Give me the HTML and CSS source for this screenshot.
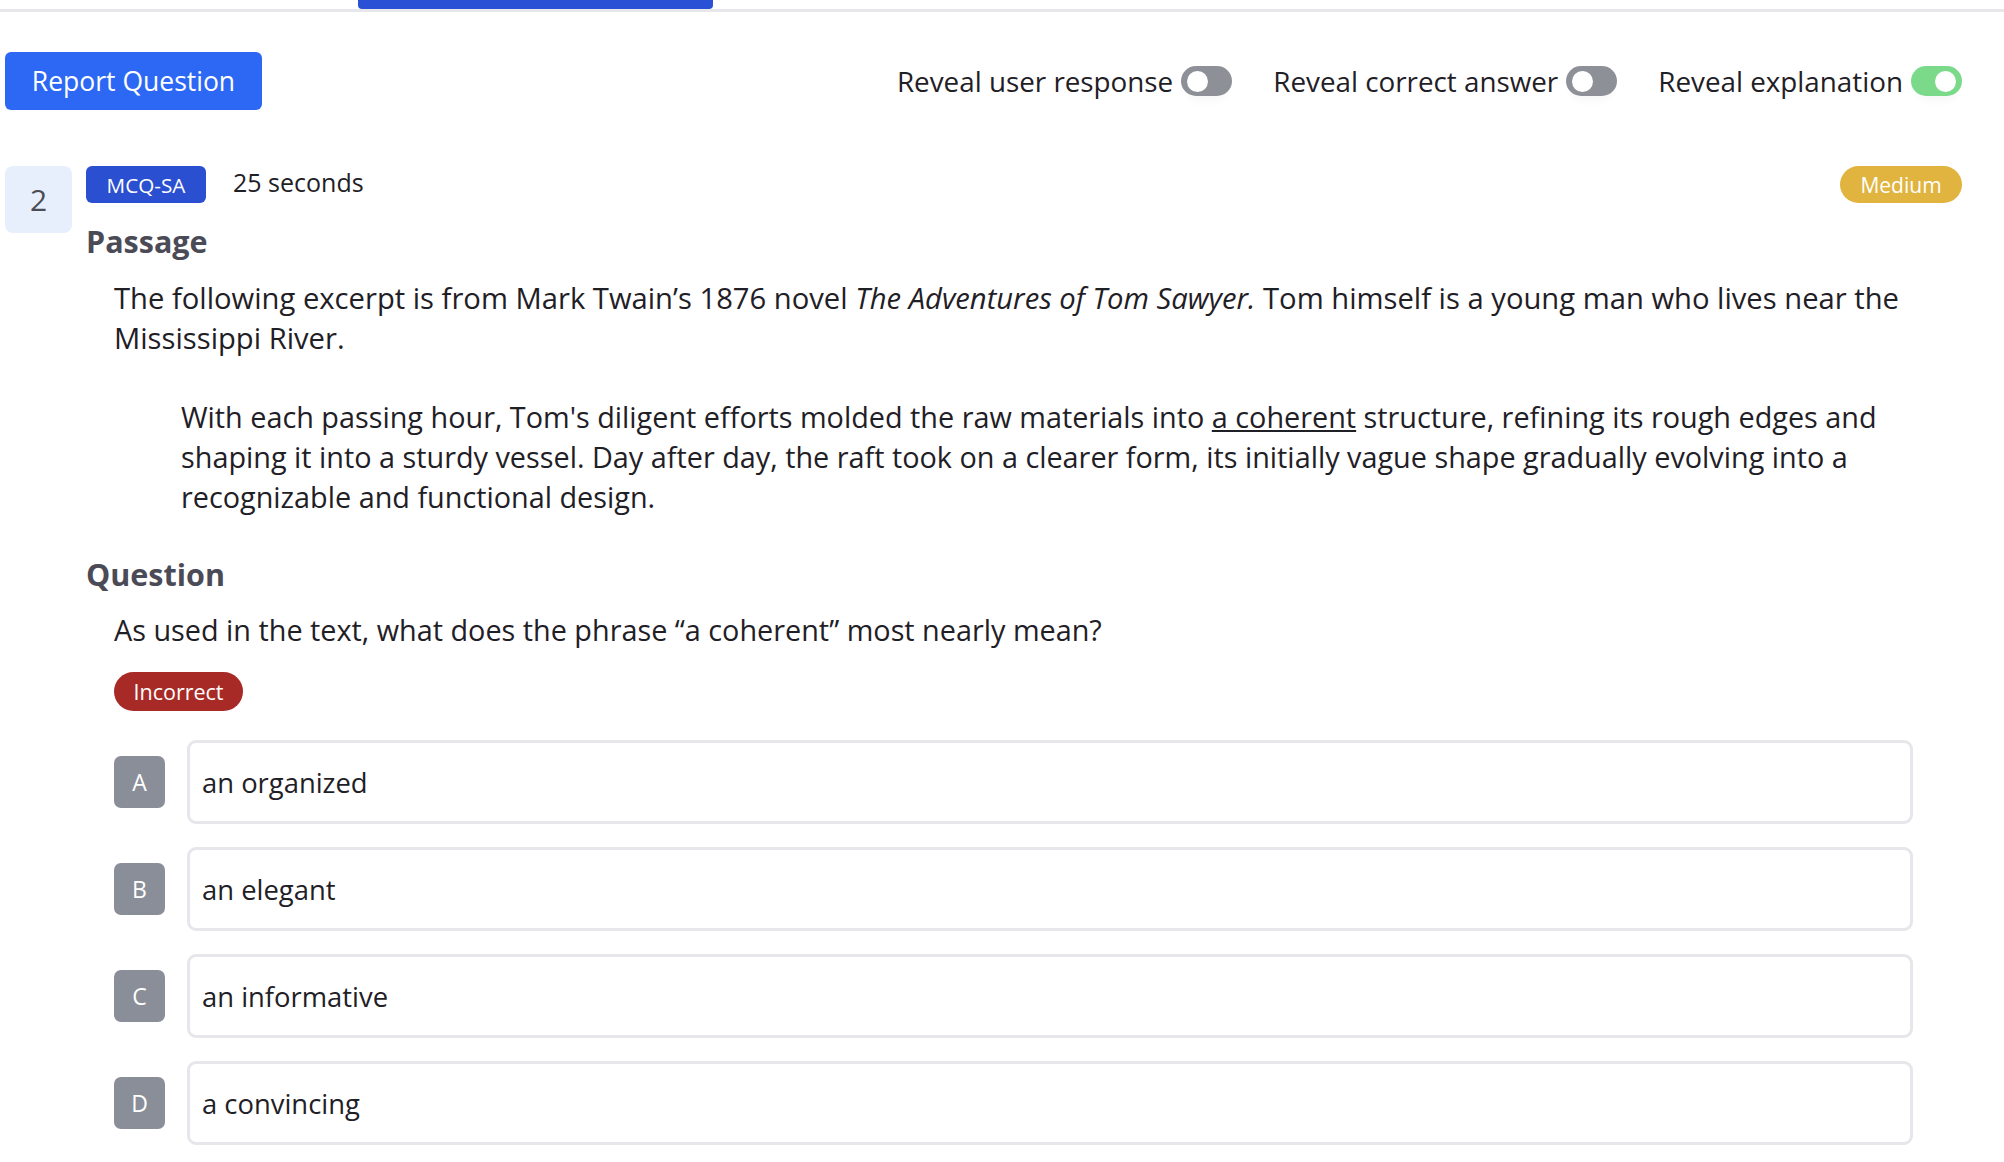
FILE: index.html
```html
<!DOCTYPE html>
<html lang="en">
<head>
<meta charset="utf-8">
<title>Question review</title>
<link rel="stylesheet" href="styles.css">
</head>
<body>
<div class="tabs">
  <div class="tab-indicator"></div>
</div>

<div class="toolbar">
  <button class="report-btn">Report Question</button>
  <div class="toggles">
    <label class="toggle-item">Reveal user response <span class="switch"><span class="knob"></span></span></label>
    <label class="toggle-item">Reveal correct answer <span class="switch"><span class="knob"></span></span></label>
    <label class="toggle-item">Reveal explanation <span class="switch on"><span class="knob"></span></span></label>
  </div>
</div>

<div class="question">
  <div class="qnum">2</div>
  <div class="qbody">
    <div class="meta">
      <span class="type-badge">MCQ-SA</span>
      <span class="time">25 seconds</span>
      <span class="difficulty">Medium</span>
    </div>
    <h2 class="section-title">Passage</h2>
    <p class="intro">The following excerpt is from Mark Twain’s 1876 novel <em>The Adventures of Tom Sawyer.</em> Tom himself is a young man who lives near the Mississippi River.</p>
    <p class="excerpt">With each passing hour, Tom's diligent efforts molded the raw materials into <u>a coherent</u> structure, refining its rough edges and shaping it into a sturdy vessel. Day after day, the raft took on a clearer form, its initially vague shape gradually evolving into a recognizable and functional design.</p>
    <h2 class="section-title q-title">Question</h2>
    <p class="prompt">As used in the text, what does the phrase “a coherent” most nearly mean?</p>
    <span class="result">Incorrect</span>
    <div class="options">
      <div class="option"><span class="letter">A</span><div class="choice">an organized</div></div>
      <div class="option"><span class="letter">B</span><div class="choice">an elegant</div></div>
      <div class="option"><span class="letter">C</span><div class="choice">an informative</div></div>
      <div class="option"><span class="letter">D</span><div class="choice">a convincing</div></div>
    </div>
  </div>
</div>
</body>
</html>
```

FILE: styles.css
```css
* { box-sizing: border-box; }

body {
  margin: 0;
  font-family: "Open Sans", "Noto Sans", sans-serif;
  color: #1f2026;
  background: #fff;
}

.tabs {
  height: 12px;
  border-bottom: 3px solid #e6e6eb;
  padding-left: 358px;
}

.tab-indicator {
  width: 355px;
  height: 9px;
  background: #2a50d6;
  border-radius: 0 0 4px 4px;
}

.toolbar {
  display: flex;
  justify-content: space-between;
  align-items: center;
  padding: 40px 42px 0 5px;
}

.report-btn {
  font-family: inherit;
  font-size: 26.5px;
  color: #fff;
  background: #2d68f5;
  border: none;
  border-radius: 6px;
  width: 257px;
  height: 58px;
  padding: 0;
}

.toggles {
  display: flex;
  gap: 41px;
  align-items: center;
}

.toggle-item {
  display: flex;
  align-items: center;
  gap: 8px;
  font-size: 27.8px;
  color: #1f2026;
}

.switch {
  width: 51px;
  height: 30px;
  border-radius: 15px;
  background: #8e9098;
  display: flex;
  align-items: center;
  padding: 0 6px;
  box-shadow: 0 10px 10px -6px rgba(0,0,0,0.04);
}

.switch.on {
  background: #7bd98a;
  justify-content: flex-end;
}

.knob {
  width: 21px;
  height: 21px;
  border-radius: 50%;
  background: #fff;
}

.question {
  display: flex;
  gap: 14px;
  padding: 56px 42px 0 5px;
}

.qnum {
  flex: none;
  width: 67px;
  height: 67px;
  border-radius: 8px;
  background: #e8effc;
  color: #4c4c55;
  font-size: 30px;
  display: flex;
  align-items: center;
  justify-content: center;
}

.qbody {
  flex: 1;
}

.meta {
  display: flex;
  align-items: center;
  height: 37px;
}

.type-badge {
  background: #2b4fd1;
  color: #fff;
  font-size: 20.7px;
  border-radius: 6px;
  height: 37px;
  width: 120px;
  display: flex;
  align-items: center;
  justify-content: center;
}

.time {
  margin-left: 27px;
  font-size: 25px;
  margin-top: -6px;
}

.difficulty {
  margin-left: auto;
  background: #e0b43e;
  color: #fff;
  font-size: 21px;
  height: 37px;
  width: 122px;
  border-radius: 19px;
  display: flex;
  align-items: center;
  justify-content: center;
}

.section-title {
  margin: 0;
  font-size: 30.5px;
  font-weight: 700;
  color: #4b4b57;
  line-height: 40px;
  margin-top: 18px;
}

.intro {
  margin: 17px 0 0 28px;
  font-size: 29.2px;
  line-height: 40px;
  padding-right: 30px;
}

.excerpt {
  margin: 39px 0 0 95px;
  font-size: 28.8px;
  line-height: 40px;
  padding-right: 50px;
}

.q-title {
  margin-top: 37px;
}

.prompt {
  margin: 16px 0 0 28px;
  font-size: 28.8px;
  line-height: 40px;
}

.result {
  display: inline-flex;
  align-items: center;
  justify-content: center;
  margin: 22px 0 0 28px;
  width: 129px;
  height: 39px;
  border-radius: 20px;
  background: #a82a27;
  color: #fff;
  font-size: 21.5px;
}

.options {
  display: flex;
  flex-direction: column;
  gap: 23px;
  margin: 29px 0 0 28px;
  padding-right: 49px;
}

.option {
  display: flex;
  align-items: center;
  gap: 22px;
}

.letter {
  flex: none;
  width: 51px;
  height: 52px;
  border-radius: 7px;
  background: #8a8e99;
  color: #fff;
  font-size: 23px;
  display: flex;
  align-items: center;
  justify-content: center;
}

.choice {
  flex: 1;
  height: 84px;
  border: 3px solid #e6e6eb;
  border-radius: 9px;
  display: flex;
  align-items: center;
  padding-left: 12px;
  font-size: 27.4px;
  color: #1f2026;
}
```
